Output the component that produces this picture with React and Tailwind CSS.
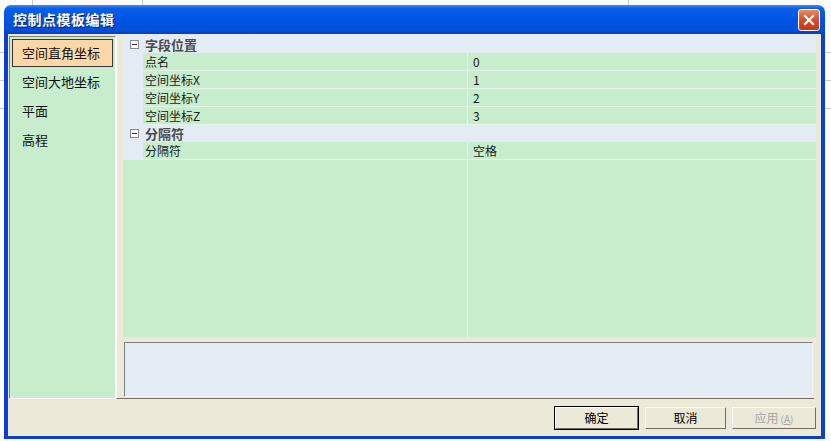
const FONT = { fontFamily: '"Noto Sans CJK SC", "Liberation Sans", sans-serif' };

const categories = [
  {
    title: '字段位置',
    rows: [
      { name: '点名', value: '0' },
      { name: '空间坐标X', value: '1' },
      { name: '空间坐标Y', value: '2' },
      { name: '空间坐标Z', value: '3' },
    ],
  },
  {
    title: '分隔符',
    rows: [{ name: '分隔符', value: '空格' }],
  },
];

const navItems = ['空间直角坐标', '空间大地坐标', '平面', '高程'];

function MinusBox() {
  return (
    <span className="w-[9px] h-[9px] border border-[#8c8c8c] bg-white flex items-center justify-center">
      <span className="w-[5px] h-px bg-[#333]" />
    </span>
  );
}

function Button({ children, primary, disabled }) {
  return (
    <div
      className={`h-[22px] flex items-center justify-center text-[12px] bg-[#ece9d8] border border-t-white border-l-white border-r-[#716f64] border-b-[#716f64] ${
        primary ? 'outline outline-1 outline-black' : ''
      } ${disabled ? 'text-[#a7a6aa]' : 'text-black'}`}
    >
      {children}
    </div>
  );
}

export default function App() {
  return (
    <div className="w-[831px] h-[441px] relative bg-[#fcfcfc] overflow-hidden" style={FONT}>
      {/* spreadsheet behind the dialog */}
      <div className="absolute left-[32px] top-0 w-px h-[40px] bg-[#c8c8c8]" />
      <div className="absolute left-[142px] top-0 w-px h-[40px] bg-[#c8c8c8]" />
      <div className="absolute left-[628px] top-0 w-px h-[40px] bg-[#c8c8c8]" />
      <div className="absolute left-0 top-[52px] w-full h-px bg-[#c8c8c8]" />
      <div className="absolute left-0 top-[80px] w-full h-px bg-[#c8c8c8]" />
      <div className="absolute left-0 top-[108px] w-full h-px bg-[#c8c8c8]" />

      {/* dialog window */}
      <div className="absolute left-[4px] top-[5px] w-[821px] h-[434px] flex flex-col rounded-t-[7px] overflow-hidden">
        <div className="h-[29px] shrink-0 flex items-center justify-between pl-[9px] pr-[5px] bg-[linear-gradient(to_bottom,#3d8cf5_0%,#0a5ee8_12%,#0054e3_50%,#0050da_85%,#0041c4_100%)]">
          <span className="text-white font-bold text-[14px] tracking-[0.5px] [text-shadow:1px_1px_#0a1e6e]">
            控制点模板编辑
          </span>
          <div className="w-[22px] h-[22px] rounded-[3px] border border-white bg-[linear-gradient(to_bottom,#e98b66,#d9522a_45%,#c23a14)] flex items-center justify-center">
            <svg width="12" height="12" viewBox="0 0 12 12">
              <path d="M2 2 L10 10 M10 2 L2 10" stroke="white" strokeWidth="2.2" strokeLinecap="square" />
            </svg>
          </div>
        </div>

        <div className="flex-1 flex flex-col bg-[#ece9d8] border-x-4 border-b-4 border-[#0a3fd4]">
          <div className="flex-1 flex pt-[2px] pl-[1px] pr-[7px]">
            {/* left nav */}
            <div className="w-[107px] bg-[#c7edcc] border border-t-[#808080] border-l-[#808080] border-r-white border-b-white pt-[2px] px-[2px] flex flex-col gap-[1px]">
              {navItems.map((item, i) => (
                <div
                  key={item}
                  className={`h-[28px] flex items-center pl-[9px] text-[13px] text-[#111] ${
                    i === 0 ? 'bg-[#fdd8a6] border border-[#3a3530]' : 'border border-transparent'
                  }`}
                >
                  {item}
                </div>
              ))}
            </div>

            {/* right area */}
            <div className="flex-1 flex flex-col border-l border-white border-b border-b-[#716f64] pl-[6px] pb-[1px]">
              <div className="h-[301px] flex flex-col bg-[#c7edcc] text-[12px] leading-[17px] mr-[-2px]">
                {categories.map((cat) => (
                  <div key={cat.title}>
                    <div className="h-[17px] flex items-center bg-[#e3ebf5]">
                      <div className="w-[20px] flex justify-center pl-[2px]">
                        <MinusBox />
                      </div>
                      <span className="pl-[2px] font-bold text-[13px] text-[#4a4a4a]">{cat.title}</span>
                    </div>
                    {cat.rows.map((row) => (
                      <div key={row.name} className="h-[18px] flex">
                        <div className="w-[20px] bg-[#e3ebf5]" />
                        <div className="flex-1 flex border-b border-[#e4f6e6]">
                          <div className="w-[325px] pl-[2px] text-[#1a1a1a] border-r border-[#e4f6e6]">{row.name}</div>
                          <div className="flex-1 pl-[5px] text-[#1a1a1a]">{row.value}</div>
                        </div>
                      </div>
                    ))}
                  </div>
                ))}
                <div className="flex-1 flex">
                  <div className="w-[345px] border-r border-[#e4f6e6]" />
                </div>
              </div>
              <div className="mt-[5px] h-[55px] mx-[1px] bg-[#e3ebf5] border border-t-[#808080] border-l-[#808080] border-r-[#f4f4f4] border-b-[#f4f4f4]" />
            </div>
          </div>

          {/* buttons */}
          <div className="h-[37px] shrink-0 flex items-center justify-end pr-[5px] pt-[1px]">
            <div className="w-[83px]">
              <Button primary>确定</Button>
            </div>
            <div className="w-[81px] ml-[7px]">
              <Button>取消</Button>
            </div>
            <div className="w-[84px] ml-[6px]">
              <Button disabled>
                应用 <span className="text-[10px] ml-[2px]">(<u>A</u>)</span>
              </Button>
            </div>
          </div>
        </div>
      </div>
    </div>
  );
}
